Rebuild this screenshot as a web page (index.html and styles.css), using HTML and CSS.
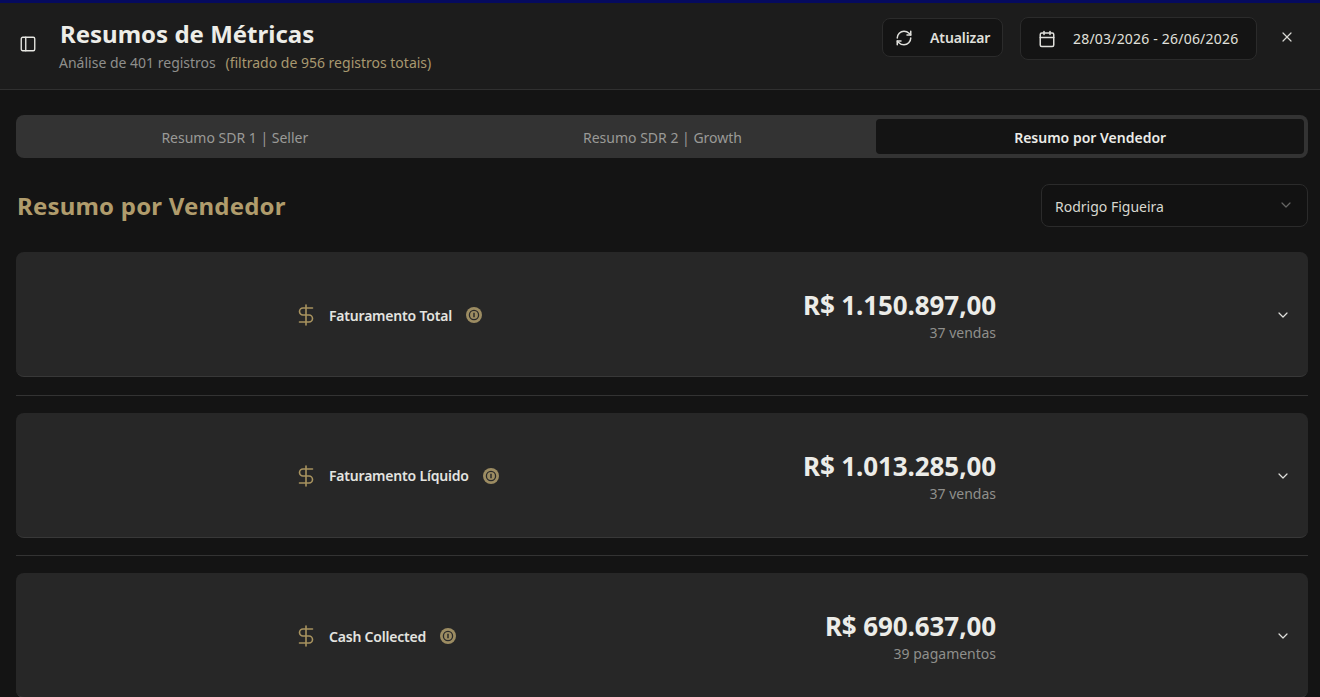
FILE: index.html
```html
<!DOCTYPE html>
<html lang="pt-BR">
<head>
    <meta charset="UTF-8">
    <title>Resumos de Métricas</title>
    <link rel="stylesheet" href="styles.css">
</head>
<body>
<div class="app">
    <header class="top">
        <div class="top-left">
            <svg class="icon side-icon" viewBox="0 0 24 24"><rect x="3" y="3" width="18" height="18" rx="2"/><path d="M9 3v18"/></svg>
            <div>
                <h1>Resumos de Métricas</h1>
                <p class="sub">Análise de 401 registros <span class="gold-soft">(filtrado de 956 registros totais)</span></p>
            </div>
        </div>
        <div class="top-right">
            <button class="btn refresh">
                <svg class="icon" viewBox="0 0 24 24"><path d="M3 12a9 9 0 0 1 9-9 9.75 9.75 0 0 1 6.74 2.74L21 8"/><path d="M21 3v5h-5"/><path d="M21 12a9 9 0 0 1-9 9 9.75 9.75 0 0 1-6.74-2.74L3 16"/><path d="M8 16H3v5"/></svg>
                Atualizar
            </button>
            <button class="btn dates">
                <svg class="icon" viewBox="0 0 24 24"><path d="M8 2v4"/><path d="M16 2v4"/><rect x="3" y="4" width="18" height="18" rx="2"/><path d="M3 10h18"/></svg>
                28/03/2026 - 26/06/2026
            </button>
            <svg class="icon close" viewBox="0 0 24 24"><path d="M18 6 6 18"/><path d="m6 6 12 12"/></svg>
        </div>
    </header>

    <main class="content">
        <div class="tabs">
            <div class="tab">Resumo SDR 1 | Seller</div>
            <div class="tab">Resumo SDR 2 | Growth</div>
            <div class="tab active">Resumo por Vendedor</div>
        </div>

        <div class="section-head">
            <h2>Resumo por Vendedor</h2>
            <div class="select">
                Rodrigo Figueira
                <svg class="icon" viewBox="0 0 24 24"><path d="m6 9 6 6 6-6"/></svg>
            </div>
        </div>

        <section class="card">
            <div class="label">
                <svg class="icon dollar" viewBox="0 0 24 24"><path d="M12 2v20"/><path d="M18.5 5H9a3.5 3.5 0 0 0 0 7h6a3.5 3.5 0 0 1 0 7H5.5"/></svg>
                <span>Faturamento Total</span>
                <svg class="info" viewBox="0 0 18 18"><circle cx="9" cy="9" r="8" fill="#9c8c62"/><circle cx="9" cy="9" r="4.6" fill="none" stroke="#2a2a2a" stroke-width="1.3"/><path d="M9 6.8v4.4" stroke="#2a2a2a" stroke-width="1.5"/></svg>
            </div>
            <div class="value">
                <strong>R$ 1.150.897,00</strong>
                <small>37 vendas</small>
            </div>
            <svg class="icon chev" viewBox="0 0 24 24"><path d="m6 9 6 6 6-6"/></svg>
        </section>
        <hr>

        <section class="card">
            <div class="label">
                <svg class="icon dollar" viewBox="0 0 24 24"><path d="M12 2v20"/><path d="M18.5 5H9a3.5 3.5 0 0 0 0 7h6a3.5 3.5 0 0 1 0 7H5.5"/></svg>
                <span>Faturamento Líquido</span>
                <svg class="info" viewBox="0 0 18 18"><circle cx="9" cy="9" r="8" fill="#9c8c62"/><circle cx="9" cy="9" r="4.6" fill="none" stroke="#2a2a2a" stroke-width="1.3"/><path d="M9 6.8v4.4" stroke="#2a2a2a" stroke-width="1.5"/></svg>
            </div>
            <div class="value">
                <strong>R$ 1.013.285,00</strong>
                <small>37 vendas</small>
            </div>
            <svg class="icon chev" viewBox="0 0 24 24"><path d="m6 9 6 6 6-6"/></svg>
        </section>
        <hr>

        <section class="card">
            <div class="label">
                <svg class="icon dollar" viewBox="0 0 24 24"><path d="M12 2v20"/><path d="M18.5 5H9a3.5 3.5 0 0 0 0 7h6a3.5 3.5 0 0 1 0 7H5.5"/></svg>
                <span>Cash Collected</span>
                <svg class="info" viewBox="0 0 18 18"><circle cx="9" cy="9" r="8" fill="#9c8c62"/><circle cx="9" cy="9" r="4.6" fill="none" stroke="#2a2a2a" stroke-width="1.3"/><path d="M9 6.8v4.4" stroke="#2a2a2a" stroke-width="1.5"/></svg>
            </div>
            <div class="value">
                <strong>R$ 690.637,00</strong>
                <small>39 pagamentos</small>
            </div>
            <svg class="icon chev" viewBox="0 0 24 24"><path d="m6 9 6 6 6-6"/></svg>
        </section>
    </main>
</div>
</body>
</html>
```

FILE: styles.css
```css
*{
    margin: 0;
    padding: 0;
    box-sizing: border-box;
}

html, body{
    height: 100%;
    overflow: hidden;
}

body{
    background-color: #141414;
    color: #e8e8e3;
    font-family: "Noto Sans", sans-serif;
}

.icon{
    width: 16px;
    height: 16px;
    fill: none;
    stroke: currentColor;
    stroke-width: 1.8;
    stroke-linecap: round;
    stroke-linejoin: round;
    flex: none;
}

.top{
    height: 90px;
    border-top: 3px solid #050a5e;
    border-bottom: 1px solid #303030;
    background-color: #1c1c1c;
    display: flex;
    justify-content: space-between;
    padding: 14px 25px 0 19px;
}

.top-left{
    display: flex;
    align-items: flex-start;
}

.side-icon{
    width: 18px;
    height: 18px;
    margin: 18px 23px 0 0;
}

h1{
    font-size: 24px;
    line-height: 34px;
    font-weight: 700;
    color: #ededE8;
}

.sub{
    font-size: 14px;
    line-height: 20px;
    margin-top: 2px;
    margin-left: -1px;
    color: #8f8f8c;
}

.gold-soft{
    color: #a8986f;
    margin-left: 6px;
}

.top-right{
    display: flex;
    align-items: flex-start;
}

.btn{
    display: flex;
    align-items: center;
    font-family: inherit;
    font-size: 14px;
    color: #e0e0dc;
    background-color: #141414;
    border: 1px solid #2b2b2b;
    border-radius: 8px;
}

.btn .icon{
    width: 18px;
    height: 18px;
    stroke-width: 2;
}

.refresh{
    width: 121px;
    height: 39px;
    margin-top: 1px;
    padding-left: 12px;
    gap: 17px;
    font-weight: 600;
    letter-spacing: -0.1px;
}

.dates{
    width: 237px;
    height: 43px;
    margin-left: 17px;
    padding-left: 17px;
    gap: 17px;
    letter-spacing: 0.2px;
}

.close{
    margin: 12px 0 0 22px;
    color: #d8d8d4;
}

.content{
    padding: 25px 12px 0 16px;
}

.tabs{
    height: 43px;
    display: grid;
    grid-template-columns: 1fr 1fr 1fr;
    padding: 4px 4px 4px 5px;
    background-color: #333333;
    border-radius: 8px;
}

.tab{
    display: flex;
    align-items: center;
    justify-content: center;
    padding-top: 1px;
    font-size: 14px;
    color: #9a9a97;
    border-radius: 4px;
}

.tab.active{
    background-color: #141414;
    color: #ecece8;
    font-weight: 600;
}

.section-head{
    display: flex;
    justify-content: space-between;
    align-items: center;
    margin-top: 26px;
    height: 43px;
}

h2{
    font-size: 24px;
    font-weight: 700;
    margin-left: 1px;
    letter-spacing: 0.2px;
    color: #b09c6c;
}

.select{
    width: 267px;
    height: 43px;
    display: flex;
    align-items: center;
    justify-content: space-between;
    padding: 1px 13px 0 13px;
    font-size: 14px;
    color: #d8d8d0;
    background-color: #121212;
    border: 1px solid #2b2b2b;
    border-radius: 8px;
}

.select .icon{
    color: #666664;
    margin-top: -2px;
}

.card{
    height: 125px;
    display: flex;
    align-items: center;
    padding: 0 17px 0 282px;
    background-color: #272727;
    border-bottom: 1px solid #383838;
    border-radius: 8px;
}

.section-head + .card{
    margin-top: 25px;
}

.label{
    flex: 1;
    display: flex;
    align-items: center;
    padding-top: 2px;
    font-size: 14px;
    font-weight: 600;
    color: #e4e4e0;
    letter-spacing: -0.2px;
}

.dollar{
    width: 24px;
    height: 24px;
    color: #a8935f;
    margin-right: 11px;
    margin-left: -4px;
    stroke-width: 1.6;
}

.info{
    width: 18px;
    height: 18px;
    margin-left: 13px;
}

.value{
    text-align: right;
    margin-right: 279px;
    padding-top: 4px;
}

.value strong{
    display: block;
    font-size: 26px;
    line-height: 32px;
    font-weight: 700;
    letter-spacing: -0.1px;
    margin-bottom: 2px;
    color: #ecece8;
}

.value small{
    display: block;
    font-size: 14px;
    line-height: 20px;
    color: #8f8f8c;
}

.chev{
    color: #e0e0dc;
    margin-top: 2px;
}

hr{
    border: none;
    border-top: 1px solid #333333;
    margin: 17.5px 0 17px;
}
```
